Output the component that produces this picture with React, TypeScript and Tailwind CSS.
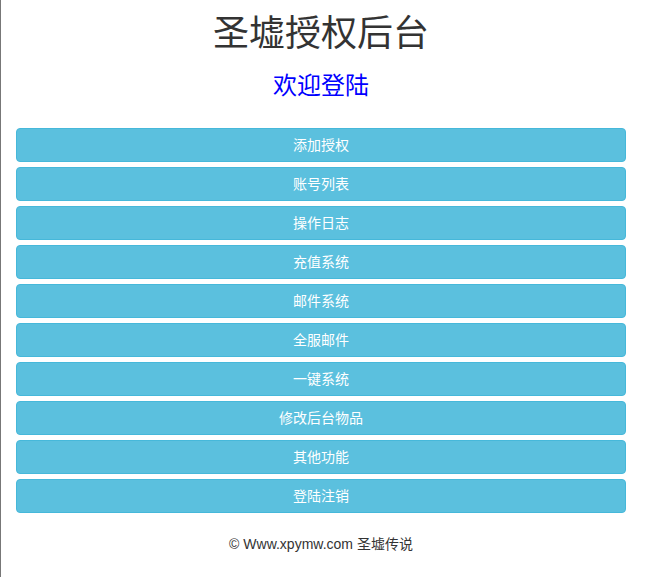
const menu = [
  "添加授权",
  "账号列表",
  "操作日志",
  "充值系统",
  "邮件系统",
  "全服邮件",
  "一键系统",
  "修改后台物品",
  "其他功能",
  "登陆注销",
];

const font = "font-['Liberation_Sans','Noto_Sans_CJK_SC',sans-serif]";

export default function App() {
  return (
    <div className={`w-[641px] min-h-[577px] border-l border-[#777] bg-white px-[15px] ${font}`}>
      <h1 className="pt-[14px] text-center text-[36px] leading-[1.1] text-[#333]">圣墟授权后台</h1>
      <h3 className="mt-[19px] text-center text-[24px] leading-[1.1] text-[#0000ff]">欢迎登陆</h3>

      <div className="mt-[29px] flex flex-col gap-[5px]">
        {menu.map((item) => (
          <a
            key={item}
            href="#"
            className="block h-[34px] rounded-[4px] border border-[#46b8da] bg-[#5bc0de] text-center text-[14px] leading-[32px] text-white"
          >
            {item}
          </a>
        ))}
      </div>

      <p className="mt-[21px] text-center text-[14px] leading-[20px] text-[#333]">© Www.xpymw.com 圣墟传说</p>
    </div>
  );
}
